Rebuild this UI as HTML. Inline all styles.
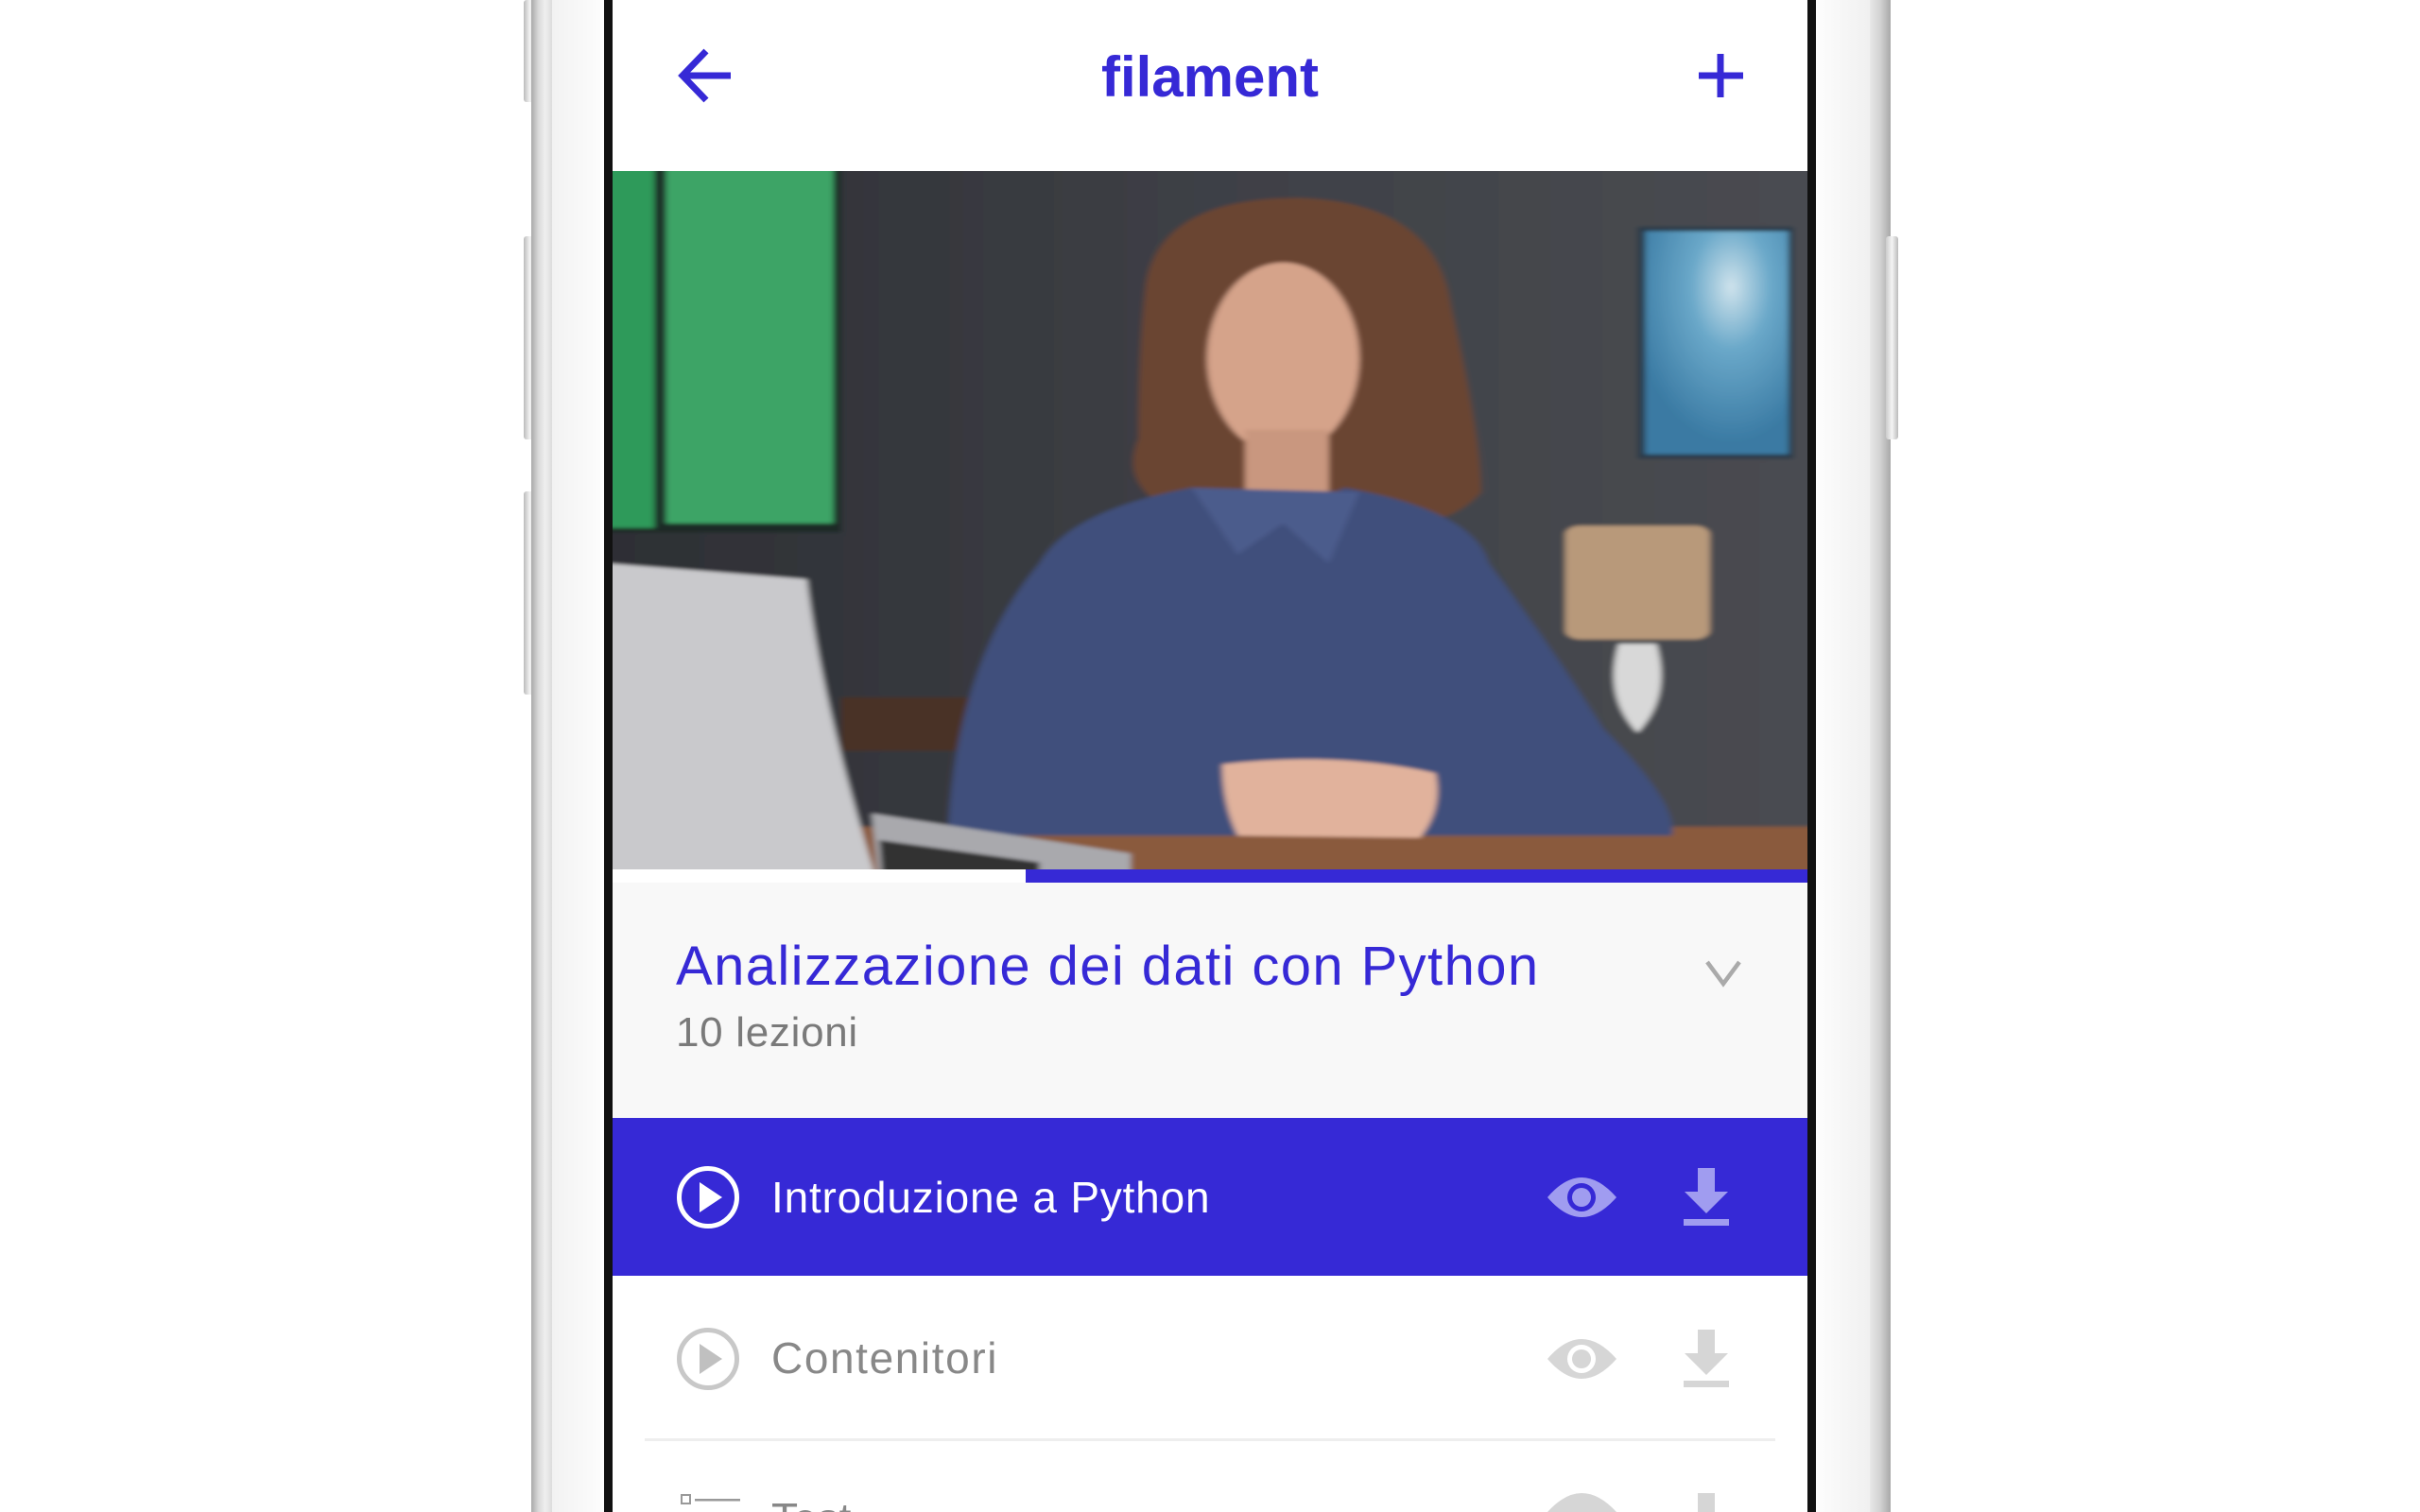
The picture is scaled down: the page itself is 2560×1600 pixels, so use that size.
<!DOCTYPE html>
<html><head><meta charset="utf-8"><style>
html,body{margin:0;padding:0;background:#fff;width:2560px;height:1600px;overflow:hidden;font-family:"Liberation Sans",sans-serif}
.abs{position:absolute}
</style></head><body>
<div class="abs" style="left:554px;top:0;width:13px;height:108px;background:linear-gradient(90deg,#bbb,#f4f4f4,#ccc);border-radius:3px"></div>
<div class="abs" style="left:554px;top:250px;width:13px;height:215px;background:linear-gradient(90deg,#bbb,#f4f4f4,#ccc);border-radius:3px"></div>
<div class="abs" style="left:554px;top:520px;width:13px;height:215px;background:linear-gradient(90deg,#bbb,#f4f4f4,#ccc);border-radius:3px"></div>
<div class="abs" style="left:562px;top:0;width:22px;height:1600px;background:linear-gradient(90deg,#a9a9a9,#d8d8d8,#efefef,#dcdcdc)"></div>
<div class="abs" style="left:584px;top:0;width:55px;height:1600px;background:linear-gradient(90deg,#f2f2f2,#fdfdfd)"></div>
<div class="abs" style="left:639px;top:0;width:9px;height:1600px;background:#111"></div>
<div class="abs" style="left:1912px;top:0;width:9px;height:1600px;background:#111"></div>
<div class="abs" style="left:1921px;top:0;width:57px;height:1600px;background:linear-gradient(90deg,#fdfdfd,#f0f0f0)"></div>
<div class="abs" style="left:1978px;top:0;width:22px;height:1600px;background:linear-gradient(90deg,#e8e8e8,#d2d2d2,#a9a9a9)"></div>
<div class="abs" style="left:1995px;top:250px;width:13px;height:215px;background:linear-gradient(90deg,#ccc,#f4f4f4,#bbb);border-radius:3px"></div>

<div class="abs" style="left:648px;top:0;width:1264px;height:1600px;background:#fff;overflow:hidden">
  <svg class="abs" style="left:0;top:0" width="1264" height="181">
    <g stroke="#3629d6" stroke-width="7" fill="none" stroke-linecap="butt">
      <path d="M125 80 H73 M99 54 L74 80 L99 106"/>
      <path d="M1172 57 V103 M1149 80 H1196"/>
    </g>
  </svg>
  <div class="abs" style="left:0;width:1264px;top:47px;text-align:center;font-weight:bold;font-size:60px;color:#3629d6;line-height:70px">filament</div>

  <svg class="abs" style="left:0;top:181px" width="1264" height="740" viewBox="0 0 1568 1568" preserveAspectRatio="none">
    <defs>
      <linearGradient id="bg" x1="0" x2="1"><stop offset="0" stop-color="#2c2e33"/><stop offset="0.5" stop-color="#3e4046"/><stop offset="1" stop-color="#4a4c52"/></linearGradient>
      <radialGradient id="fr" cx="0.6" cy="0.25" r="0.7"><stop offset="0" stop-color="#cfe3ec"/><stop offset="0.4" stop-color="#6aa8c9"/><stop offset="1" stop-color="#3a7aa3"/></radialGradient>
      <filter id="bl" x="-5%" y="-5%" width="110%" height="110%"><feGaussianBlur stdDeviation="4"/></filter>
    </defs>
    <rect width="1568" height="1568" fill="url(#bg)"/>
    <rect x="0" y="0" width="55" height="800" fill="#2f9a5a"/>
    <rect x="0" y="1470" width="1568" height="98" fill="#8a5a3e"/>
    <path d="M0 880 L255 915 Q275 1200 350 1568 L0 1568 Z" fill="#c9c9cc"/>
    <g filter="url(#bl)">
    <rect x="-40" y="-40" width="1648" height="1648" fill="url(#bg)"/>
    <rect x="-40" y="-40" width="340" height="850" fill="#1f2a25"/>
    <rect x="-40" y="-40" width="95" height="840" fill="#2f9a5a"/>
    <rect x="70" y="-40" width="220" height="830" fill="#3ea466"/>
    <rect x="1345" y="125" width="205" height="520" fill="#2b3a48"/>
    <rect x="1355" y="135" width="188" height="500" fill="url(#fr)"/>
    <rect x="300" y="1180" width="350" height="120" fill="#4a3228"/>
    <rect x="1250" y="795" width="190" height="255" rx="20" fill="#b8997a"/>
    <path d="M1320 1060 Q1300 1180 1345 1260 Q1390 1180 1370 1060 Z" fill="#d8d8d8"/>
    <rect x="-40" y="1470" width="1648" height="140" fill="#8a5a3e"/>
    <path d="M700 250 Q720 60 900 60 Q1080 70 1100 300 Q1140 600 1140 720 Q1100 800 1000 800 L760 780 Q660 720 690 600 Q690 400 700 250 Z" fill="#6a4431"/>
    <ellipse cx="880" cy="420" rx="100" ry="215" fill="#d5a38a"/>
    <rect x="830" y="580" width="110" height="180" fill="#c9977f"/>
    <path d="M440 1490 Q450 1100 560 880 Q600 760 760 710 L880 790 L960 710 Q1130 760 1150 880 Q1230 1060 1300 1250 Q1400 1420 1390 1490 Z" fill="#3f4f7c"/>
    <path d="M760 710 L820 860 L880 790 L940 880 L980 720 Z" fill="#4b5c8c"/>
    <path d="M800 1330 Q950 1300 1080 1350 Q1090 1430 1060 1495 L820 1490 Q800 1420 800 1330 Z" fill="#e1b29c"/>
    <path d="M-40 875 L255 915 Q275 1200 350 1610 L-40 1610 Z" fill="#c9c9cc"/>
    <path d="M340 1440 L680 1530 L680 1610 L350 1610 Z" fill="#a9a9ad"/>
    <path d="M350 1500 L560 1550 L560 1610 L355 1610 Z" fill="#333"/>
    </g>
  </svg>
  <div class="abs" style="left:0;top:920px;width:1264px;height:14px;background:#fff"></div>
  <div class="abs" style="left:437px;top:920px;width:827px;height:14px;background:#3629d6"></div>

  <div class="abs" style="left:0;top:934px;width:1264px;height:249px;background:#f8f8f8"></div>
  <div class="abs" style="left:67px;top:990px;font-size:58px;line-height:66px;color:#3629d6;white-space:nowrap;letter-spacing:1.4px">Analizzazione dei dati con Python</div>
  <div class="abs" style="left:67px;top:1068px;font-size:44px;line-height:50px;color:#7a7a7a;letter-spacing:0.7px">10 lezioni</div>
  <svg class="abs" style="left:1150px;top:1010px" width="50" height="40"><path d="M8 8 L25 31 L42 8" stroke="#aaa" stroke-width="4.5" fill="none"/></svg>

  <div class="abs" style="left:0;top:1183px;width:1264px;height:167px;background:#3629d6"></div>
  <svg class="abs" style="left:0;top:1183px" width="1264" height="167">
    <circle cx="101" cy="84" r="30.5" stroke="#fff" stroke-width="5" fill="none"/>
    <path d="M92 68 L116 84 L92 100 Z" fill="#fff"/>
    <path d="M989 84 Q1025 42 1062 84 Q1025 126 989 84 Z" fill="#a09cf0"/>
    <circle cx="1025" cy="84" r="15" fill="#3629d6"/>
    <circle cx="1025" cy="84" r="10" fill="#a09cf0"/>
    <path d="M1148 53 H1166 V78 H1180 L1157 101 L1134 78 H1148 Z" fill="#a09cf0"/>
    <rect x="1133" y="107" width="48" height="7" fill="#a09cf0"/>
  </svg>
  <div class="abs" style="left:168px;top:1240px;font-size:46px;line-height:54px;color:#fff;white-space:nowrap;letter-spacing:0.8px">Introduzione a Python</div>

  <svg class="abs" style="left:0;top:1350px" width="1264" height="250">
    <circle cx="101" cy="88" r="30.5" stroke="#c8c8c8" stroke-width="5" fill="none"/>
    <path d="M92 72 L116 88 L92 104 Z" fill="#c0c0c0"/>
    <path d="M989 88 Q1025 46 1062 88 Q1025 130 989 88 Z" fill="#d6d6d6"/>
    <circle cx="1025" cy="88" r="15" fill="#fff"/>
    <circle cx="1025" cy="88" r="10" fill="#d6d6d6"/>
    <path d="M1148 57 H1166 V82 H1180 L1157 105 L1134 82 H1148 Z" fill="#d6d6d6"/>
    <rect x="1133" y="111" width="48" height="7" fill="#d6d6d6"/>
    <rect x="34" y="172" width="1196" height="3" fill="#eeeeee"/>
    <rect x="73" y="232" width="9" height="9" stroke="#999" stroke-width="2" fill="none"/>
    <rect x="87" y="236" width="48" height="2.5" fill="#999"/>
    <path d="M989 250 Q1025 210 1062 250 Z" fill="#d6d6d6"/>
    <rect x="1148" y="230" width="18" height="20" fill="#d6d6d6"/>
  </svg>
  <div class="abs" style="left:168px;top:1410px;font-size:46px;line-height:54px;color:#888;white-space:nowrap;letter-spacing:1.6px">Contenitori</div>
  <div class="abs" style="left:168px;top:1580px;font-size:46px;line-height:54px;color:#888;white-space:nowrap">Test</div>
</div>
</body></html>
